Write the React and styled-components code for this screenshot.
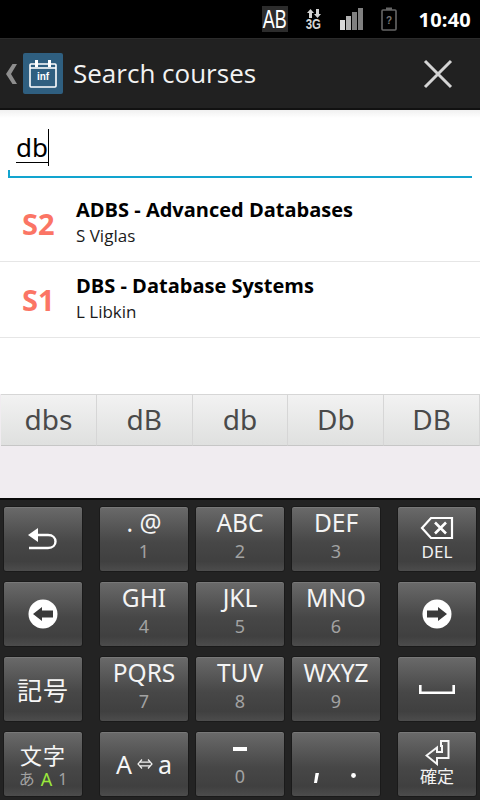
import React from "react";
import styled, { createGlobalStyle } from "styled-components";

const Global = createGlobalStyle`
  html, body { margin: 0; padding: 0; background: #fff; }
  #root { width: 480px; height: 800px; overflow: hidden; }
  * { box-sizing: border-box; }
`;
const Page = styled.div`
  width: 480px; height: 800px; display: flex; flex-direction: column;
  font-family: "Open Sans", "Noto Sans", sans-serif; background: #fff;
`;
const StatusBar = styled.div`
  height: 38px; background: #000; display: flex; align-items: center; justify-content: flex-end;
  padding-right: 9px;
`;
const AbBadge = styled.div`
  width: 26px; height: 26px; margin-right: 18px; background: #2c2c2c;
  display: flex; align-items: center; justify-content: center; overflow: hidden;
  color: #fff; font: 400 25px "Liberation Sans", sans-serif;
  span { display: block; transform: scaleX(.72); letter-spacing: 0; }
`;
const NetWrap = styled.div`
  width: 16px; margin-right: 18px; display: flex; flex-direction: column; align-items: center;
  color: #d4d4d4; margin-top: 1px;
  span { font: 700 14px/12px "Liberation Sans", sans-serif; transform: scaleX(.82); }
`;
const SignalWrap = styled.div`
  display: flex; margin-right: 17px;
`;
const Clock = styled.div`
  color: #fff; font: 700 20px "Open Sans", sans-serif; margin-left: 22px; letter-spacing: .2px;
`;
const ActionBar = styled.div`
  height: 72px; display: flex; align-items: center; padding: 0 27px 0 6px;
  background: #212121; border-top: 1px solid #2b2b2b; border-bottom: 2px solid #111;
`;
const Logo = styled.div`
  width: 40px; height: 41px; margin-left: 6px; border-radius: 2px; background: #2f5f80;
  display: flex; align-items: center; justify-content: center; position: relative;
`;
const LogoText = styled.span`
  position: absolute; left: 0; right: 0; top: 18px; text-align: center; color: #fff;
  font: 700 10px/12px "Liberation Sans", sans-serif;
`;
const Title = styled.div`
  color: #f2f2f2; font-size: 26px; margin-left: 10px; flex: 1; padding-bottom: 2px;
`;
const SearchArea = styled.div`
  height: 76px; padding: 19px 8px 0; background: linear-gradient(#f0f0f0 0, #fff 8px);
`;
const InputBox = styled.div`
  height: 49px; border-bottom: 2px solid #12a4cf; position: relative; padding-left: 8px;
  &::before { content: ""; position: absolute; left: 0; bottom: 0; width: 2px; height: 6px; background: #12a4cf; }
`;
const Typed = styled.span`
  display: inline-block; position: relative; height: 34px; padding-top: 2px; padding-right: 1px;
  font: 400 26px/33px "Noto Sans", sans-serif; color: #000;
  border-bottom: 1px solid #000;
  &::after { content: ""; position: absolute; right: 0; top: 0; width: 1px; height: 37px; background: #000; }
`;
const Results = styled.div`
  height: 208px; background: #fff;
`;
const ResultRow = styled.div`
  height: 76px; border-bottom: 1px solid #e6e6e6; display: flex; align-items: flex-start;
`;
const Sem = styled.div`
  width: 76px; padding: 20px 0 0 22px; color: #fb7565; font: 700 29px/36px "Open Sans", sans-serif;
`;
const Info = styled.div`
  padding-top: 10px; display: flex; flex-direction: column;
`;
const CourseName = styled.div`
  font: 700 20px/27px "Open Sans", sans-serif; color: #000;
`;
const Lecturer = styled.div`
  font: 400 17px/26px "Open Sans", sans-serif; color: #1a1a1a;
`;
const Suggestions = styled.div`
  height: 52px; display: flex; padding-left: 1px; background: #f0ecf0;
`;
const Suggestion = styled.div`
  flex: 1; display: flex; align-items: center; justify-content: center;
  background: linear-gradient(#f2f2f2, #dfe0df); border: 1px solid #d6d6d6; border-left: 0;
  border-bottom: 1px solid #c6c6c6; color: #4a4a4a;
  font: 400 28px "Noto Sans", sans-serif; padding-bottom: 2px;
`;
const Gap = styled.div`
  height: 52px; background: #f0ecf0;
`;
const Keyboard = styled.div`
  height: 302px; background: #232323; border-top: 2px solid #0a0a0a; padding: 6px 3px 0;
  display: grid; grid-template-columns: 96px 96px 96px 106px 80px; grid-auto-rows: 66px;
  row-gap: 9px;
`;
const Key = styled.div`
  position: relative; border-radius: 3px; display: flex; flex-direction: column; align-items: center;
  justify-content: ${p => (p.$center ? "center" : "flex-start")};
  background: linear-gradient(#6a6a6a 0, #474747 55%, #404040 85%, #4c4c4c 100%);
  border: 1px solid #1a1a1a; box-shadow: inset 0 1px 0 #787878;
  color: #fff; font-family: "Noto Sans", sans-serif;
  width: ${p => (p.$side ? "80px" : "90px")};
`;
const KeyMain = styled.div`
  font: 400 24.5px/30px "Noto Sans", sans-serif; margin-top: 1px; white-space: nowrap; color: #f4f4f4;
`;
const KeySub = styled.div`
  font: 400 18px/22px "Noto Sans", sans-serif; color: #a2a2a2; margin-top: ${p => p.$mt ?? 2}px;
`;
const SideLabel = styled.div`
  font: 400 ${p => p.$size || 15}px/${p => p.$lh || 16}px "Noto Sans", "Noto Sans CJK JP", sans-serif; color: #f2f2f2;
  margin-top: ${p => p.$mt || 0}px;
`;
const CjkMain = styled.div`
  font: 400 ${p => p.$size || 24}px/${p => p.$lh || 30}px "Noto Sans CJK JP", sans-serif; color: #f6f6f6; letter-spacing: ${p => p.$ls || 0}px;
`;
const ModeRow = styled.div`
  display: flex; align-items: center; gap: 6px; font: 400 16px/18px "Noto Sans", "Noto Sans CJK JP", sans-serif; color: #a2a2a2;
  margin-top: 2px;
  b { font-weight: 400; color: #9be83c; font-size: 18px; }
`;
const CaseRow = styled.div`
  display: flex; align-items: center; gap: 5px; font: 400 25px/30px "Noto Sans", sans-serif; color: #f6f6f6;
`;
const PunctRow = styled.div`
  position: absolute; left: 22px; right: 24px; bottom: 13px; display: flex; justify-content: space-between;
  align-items: flex-start;
`;
const DashWrap = styled.div`
  display: flex; margin-top: 15px;
`;

const Back = () => (
  <svg width="11" height="20" viewBox="0 0 11 20"><path d="M11 0 L5 10 L11 20 H6.5 L0 10 L6.5 0Z" fill="#8e8e8e" /></svg>
);
const CalIcon = () => (
  <svg width="30" height="32" viewBox="0 0 30 32" fill="none" stroke="#fff">
    <rect x="2" y="6" width="26" height="23" strokeWidth="1.6" rx="1" />
    <path d="M2 10 H28" strokeWidth="1.6" />
    <rect x="7" y="2" width="3" height="7" fill="#fff" stroke="none" />
    <rect x="20" y="2" width="3" height="7" fill="#fff" stroke="none" />
  </svg>
);
const Close = () => (
  <svg width="30" height="30" viewBox="0 0 30 30"><path d="M2 2 L28 28 M28 2 L2 28" stroke="#d4d4d4" strokeWidth="3" /></svg>
);
const Signal = () => (
  <svg width="24" height="22" viewBox="0 0 24 22">
    <rect x="0" y="12" width="5" height="10" fill="#d8d8d8" />
    <rect x="6" y="8" width="5" height="14" fill="#b0b0b0" />
    <rect x="12" y="4" width="5" height="18" fill="#808080" />
    <rect x="18" y="0" width="5" height="22" fill="#808080" />
  </svg>
);
const Battery = () => (
  <svg width="16" height="24" viewBox="0 0 16 24" fill="none">
    <rect x="1" y="3" width="14" height="20" rx="1" stroke="#666" strokeWidth="1.6" />
    <rect x="5" y="0.5" width="6" height="2.5" fill="#666" />
    <text x="8" y="16.5" textAnchor="middle" fontSize="10" fontWeight="700" fontFamily="Liberation Sans" fill="#777">?</text>
  </svg>
);
const Arrows = () => (
  <svg width="16" height="9" viewBox="0 0 16 9"><path d="M4.5 0 L8 4 H6 V9 H3 V4 H1Z M11.5 9 L8 5 H10 V0 H13 V5 H15Z" fill="#d4d4d4" /></svg>
);
const Undo = () => (
  <svg width="30" height="22" viewBox="0 0 30 22" fill="none">
    <path d="M0 7 L10 0 V14Z" fill="#fff" />
    <path d="M9 7 H20 C30 7 30 20 20 20 H1" stroke="#fff" strokeWidth="2.4" />
  </svg>
);
const CircleArrow = ({ flip }) => (
  <svg width="30" height="30" viewBox="0 0 30 30" style={flip ? { transform: "scaleX(-1)" } : undefined}>
    <circle cx="15" cy="15" r="14.5" fill="#fff" />
    <path d="M5 15 L14 8 V11.5 H25 V18.5 H14 V22Z" fill="#3a3a3a" />
  </svg>
);
const DelIcon = () => (
  <svg width="34" height="24" viewBox="0 0 34 24" fill="none">
    <path d="M32 2 H11 L2 12 L11 22 H32Z" stroke="#fff" strokeWidth="2.2" />
    <path d="M15 6.5 L26 17.5 M26 6.5 L15 17.5" stroke="#fff" strokeWidth="2.6" />
  </svg>
);
const Space = () => (
  <svg width="36" height="9" viewBox="0 0 36 9" fill="none"><path d="M1.3 0 V7.7 H34.7 V0" stroke="#fff" strokeWidth="2.6" /></svg>
);
const Enter = () => (
  <svg width="25" height="26" viewBox="0 0 25 26" fill="none">
    <path d="M16 1 H23.5 V18 H12 V24 L1.5 15.5 L12 7.5 V12 H17 V6 H16Z" stroke="#f6f6f6" strokeWidth="2" />
  </svg>
);
const DoubleArrow = () => (
  <svg width="16" height="10" viewBox="0 0 16 10" fill="none"><path d="M5 .5 L1 5 L5 9.5 M11 .5 L15 5 L11 9.5 M3 3.2 H13 M3 6.8 H13" stroke="#f0f0f0" strokeWidth="1.2" /></svg>
);
const Dash = () => (
  <svg width="14" height="4" viewBox="0 0 14 4"><rect width="14" height="4" fill="#fff" /></svg>
);
const Comma = () => (
  <svg width="5" height="10" viewBox="0 0 5 10"><path d="M1.5 0 H5 L3 10 H0Z" fill="#fff" /></svg>
);
const Dot = () => (
  <svg width="5" height="5" viewBox="0 0 5 5"><circle cx="2.5" cy="2.5" r="2.4" fill="#fff" /></svg>
);

const results = [
  { sem: "S2", name: "ADBS - Advanced Databases", who: "S Viglas" },
  { sem: "S1", name: "DBS - Database Systems", who: "L Libkin" },
];
const words = ["dbs", "dB", "db", "Db", "DB"];

const T9 = ({ main, sub }) => (
  <Key>
    <KeyMain>{main}</KeyMain>
    <KeySub>{sub}</KeySub>
  </Key>
);

export default function App() {
  return (
    <Page>
      <Global />
      <StatusBar>
        <AbBadge><span>AB</span></AbBadge>
        <NetWrap><Arrows /><span>3G</span></NetWrap>
        <SignalWrap><Signal /></SignalWrap>
        <Battery />
        <Clock>10:40</Clock>
      </StatusBar>
      <ActionBar>
        <Back />
        <Logo><CalIcon /><LogoText>inf</LogoText></Logo>
        <Title>Search courses</Title>
        <Close />
      </ActionBar>
      <SearchArea>
        <InputBox><Typed>db</Typed></InputBox>
      </SearchArea>
      <Results>
        {results.map(r => (
          <ResultRow key={r.sem}>
            <Sem>{r.sem}</Sem>
            <Info>
              <CourseName>{r.name}</CourseName>
              <Lecturer>{r.who}</Lecturer>
            </Info>
          </ResultRow>
        ))}
      </Results>
      <Suggestions>
        {words.map(w => <Suggestion key={w}>{w}</Suggestion>)}
      </Suggestions>
      <Gap />
      <Keyboard>
        <Key $side="left" $center><Undo /></Key>
        <T9 main=". @" sub="1" />
        <T9 main="ABC" sub="2" />
        <T9 main="DEF" sub="3" />
        <Key $side="right" $center><DelIcon /><SideLabel $size={17} $lh={20} $mt={2}>DEL</SideLabel></Key>

        <Key $side="left" $center><CircleArrow /></Key>
        <T9 main="GHI" sub="4" />
        <T9 main="JKL" sub="5" />
        <T9 main="MNO" sub="6" />
        <Key $side="right" $center><CircleArrow flip /></Key>

        <Key $side="left" $center><CjkMain $size={25} $lh={30} $ls={1}>記号</CjkMain></Key>
        <T9 main="PQRS" sub="7" />
        <T9 main="TUV" sub="8" />
        <T9 main="WXYZ" sub="9" />
        <Key $side="right" $center><Space /></Key>

        <Key $side="left" $center>
          <CjkMain $size={22} $lh={28} $ls={1}>文字</CjkMain>
          <ModeRow><span>あ</span><b>A</b><span>1</span></ModeRow>
        </Key>
        <Key $center><CaseRow><span>A</span><DoubleArrow /><span>a</span></CaseRow></Key>
        <Key>
          <DashWrap><Dash /></DashWrap>
          <KeySub $mt={14}>0</KeySub>
        </Key>
        <Key><PunctRow><Comma /><Dot /></PunctRow></Key>
        <Key $side="right" $center><Enter /><SideLabel $size={17} $lh={22}>確定</SideLabel></Key>
      </Keyboard>
    </Page>
  );
}
